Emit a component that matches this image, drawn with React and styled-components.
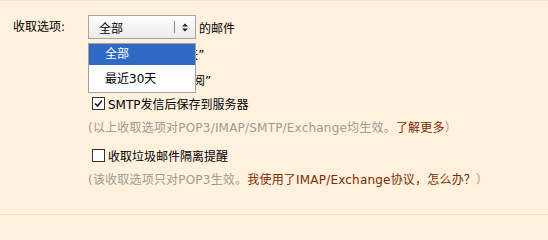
import React from 'react';
import styled, { createGlobalStyle } from 'styled-components';

const GlobalStyle = createGlobalStyle`
  html, body {
    margin: 0;
    padding: 0;
    background: #fff1de;
  }
  body {
    font-family: "DejaVu Sans", "Noto Sans CJK SC", sans-serif;
    font-size: 12px;
    color: #000;
  }
`;

const Panel = styled.div`
  width: 548px;
  height: 229px;
  box-sizing: border-box;
  border-top: 1px solid #f6e2c0;
  background: linear-gradient(#fff4e6 0, #fff1de 4px);
`;

const FormRow = styled.div`
  display: flex;
  padding: 13px 0 0 13px;
  border-bottom: 1px solid #f5e2bd;
  height: 214px;
  box-sizing: border-box;
`;

const Label = styled.div`
  width: 75px;
  flex: none;
  line-height: 24px;
  padding-top: 1px;
`;

const Content = styled.div`
  display: flex;
  flex-direction: column;
  position: relative;
`;

const SelectLine = styled.div`
  display: flex;
  align-items: center;
  gap: 3px;
  height: 26px;
`;

const SelectBox = styled.div`
  width: 106px;
  height: 22px;
  border: 1px solid #a3a3a3;
  background: linear-gradient(#fefefe, #ebebeb);
  display: flex;
  align-items: center;
`;

const SelectText = styled.span`
  flex: 1;
  padding-left: 10px;
`;

const Divider = styled.span`
  width: 1px;
  height: 12px;
  background: #8a8a8a;
`;

const Arrows = styled.span`
  width: 20px;
  display: flex;
  justify-content: center;
`;

const CheckRow = styled.label`
  display: flex;
  align-items: center;
  height: ${p => p.$h || 24}px;
  padding-left: 4px;
  gap: 3px;
`;

const Box = styled.span`
  width: 11px;
  height: 11px;
  border: 1px solid #333;
  background: #fff;
  display: flex;
  align-items: center;
  justify-content: center;
`;

const Note = styled.div`
  color: #a29a8f;
  height: ${p => p.$h || 25}px;
  line-height: ${p => p.$h || 25}px;
  white-space: nowrap;
  letter-spacing: 0.2px;
`;

const Link = styled.a`
  color: #7a2c00;
  text-decoration: none;
`;

const Dropdown = styled.div`
  position: absolute;
  left: 0;
  top: 29px;
  width: 106px;
  height: 48px;
  border: 1px solid #a0a0a0;
  background: #fff;
`;

const Option = styled.div`
  height: ${p => p.$h}px;
  line-height: 21px;
  padding: ${p => p.$pt || 0}px 0 0 16px;
  box-sizing: border-box;
  background: ${p => (p.$active ? '#316ac5' : 'transparent')};
  color: ${p => (p.$active ? '#fff' : '#000')};
`;

function Check({ checked }) {
  return (
    <Box>
      {checked && (
        <svg width="9" height="9" viewBox="0 0 9 9">
          <path d="M1 4.5 L3.5 7 L8 1.5" fill="none" stroke="#222" strokeWidth="1.6" />
        </svg>
      )}
    </Box>
  );
}

export default function App() {
  return (
    <Panel>
      <GlobalStyle />
      <FormRow>
        <Label>收取选项:</Label>
        <Content>
          <SelectLine>
            <SelectBox>
              <SelectText>全部</SelectText>
              <Divider />
              <Arrows>
                <svg width="6" height="9" viewBox="0 0 6 9">
                  <path d="M0 3.5 L3 0.5 L6 3.5 Z M0 5.5 L3 8.5 L6 5.5 Z" fill="#222" />
                </svg>
              </Arrows>
            </SelectBox>
            <span>的邮件</span>
          </SelectLine>
          <CheckRow $h={27}>
            <Check />
            收取“我的文件夹”
          </CheckRow>
          <CheckRow $h={24}>
            <Check />
            收取“QQ邮件订阅”
          </CheckRow>
          <CheckRow $h={25}>
            <Check checked />
            SMTP发信后保存到服务器
          </CheckRow>
          <Note>
            (以上收取选项对POP3/IMAP/SMTP/Exchange均生效。<Link href="#">了解更多</Link>）
          </Note>
          <CheckRow $h={28}>
            <Check />
            收取垃圾邮件隔离提醒
          </CheckRow>
          <Note $h={22}>
            (该收取选项只对POP3生效。<Link href="#">我使用了IMAP/Exchange协议，怎么办？</Link>）
          </Note>
          <Dropdown>
            <Option $active $h={21}>全部</Option>
            <Option $h={27} $pt={4}>最近30天</Option>
          </Dropdown>
        </Content>
      </FormRow>
    </Panel>
  );
}
